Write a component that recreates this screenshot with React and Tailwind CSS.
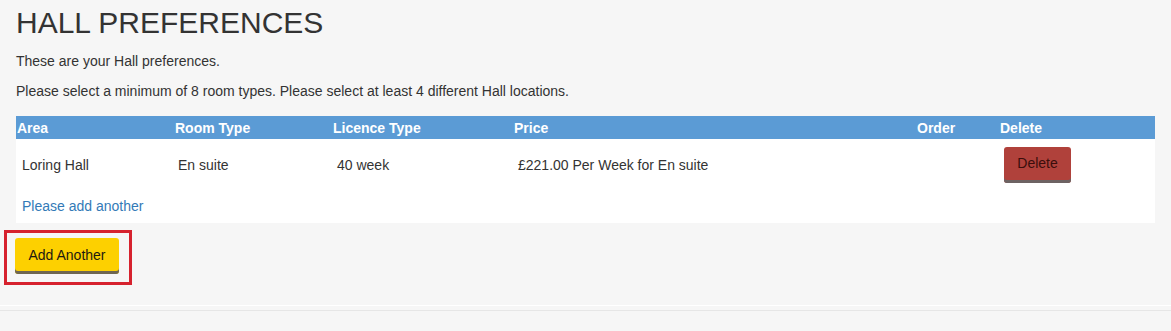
export default function App() {
  return (
    <div className="min-h-[331px] w-[1171px] bg-[#f6f6f6] text-[#333] text-[14px] leading-[20px]" style={{ fontFamily: '"Liberation Sans", Arial, sans-serif' }}>
      <div className="px-[16px] pt-[6px]">
        <h1 className="text-[30px] leading-[33px] font-normal text-[#333]">HALL PREFERENCES</h1>
        <p className="mt-[12px]">These are your Hall preferences.</p>
        <p className="mt-[10px]">Please select a minimum of 8 room types. Please select at least 4 different Hall locations.</p>
        <div className="mt-[15px] w-[1139px] bg-white">
          <div className="grid grid-cols-[158px_158px_181px_403px_83px_156px] bg-[#5b9bd5] h-[23px] items-center font-bold text-white">
            <div className="pl-[1px]">Area</div>
            <div className="pl-[1px]">Room Type</div>
            <div className="pl-[1px]">Licence Type</div>
            <div className="pl-[1px]">Price</div>
            <div className="pl-[1px]">Order</div>
            <div className="pl-[1px]">Delete</div>
          </div>
          <div className="grid grid-cols-[158px_158px_181px_403px_83px_156px] h-[51px] items-center">
            <div className="pl-[6px]">Loring Hall</div>
            <div className="pl-[4px]">En suite</div>
            <div className="pl-[5px]">40 week</div>
            <div className="pl-[5px]">£221.00 Per Week for En suite</div>
            <div></div>
            <div className="pl-[5px]">
              <button className="w-[67px] h-[36px] rounded-[3px] bg-[#b0413b] text-[#3b0e0c] shadow-[inset_0_-3px_0_#6d6363] pb-[3px]">Delete</button>
            </div>
          </div>
          <div className="pl-[6px] pt-[6px] pb-[7px] text-[#337ab7]">Please add another</div>
        </div>
      </div>
      <div className="ml-[4px] mt-[7px] w-[128px] h-[55px] border-[3px] border-[#d6222e] pl-[8px] pt-[5px]">
        <button className="w-[104px] h-[36px] rounded-[3px] bg-[#fdd000] text-[#1d1a10] shadow-[inset_0_-3px_0_#6e6652] pb-[3px]">Add Another</button>
      </div>
      <div className="mt-[20px] border-b border-white"></div>
      <div className="mt-[4px] border-t border-[#e6e6e6]"></div>
    </div>
  );
}
